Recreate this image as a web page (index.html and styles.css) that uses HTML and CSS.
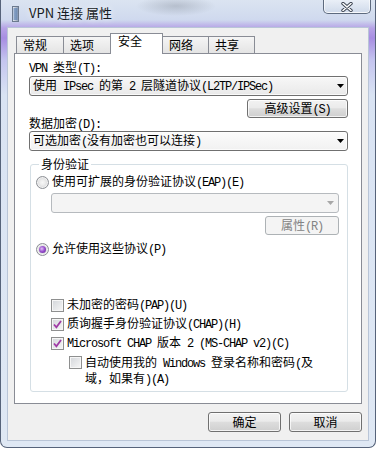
FILE: index.html
```html
<!doctype html>
<html lang="zh-CN">
  <head>
    <meta charset="UTF-8" />
    <title>VPN 连接 属性</title>
    <link rel="stylesheet" href="styles.css">
  </head>
  <body>
    <div class="window">
      <div class="titlebar">
        <svg class="app-icon" width="7" height="16" viewBox="0 0 7 16">
          <defs>
            <linearGradient id="ig" x1="0" x2="1" y1="0" y2="0">
              <stop offset="0" stop-color="#eef2f7" />
              <stop offset="1" stop-color="#8d9bb0" />
            </linearGradient>
          </defs>
          <rect x="0.5" y="0.5" width="6" height="15" fill="url(#ig)" stroke="#6c7a8e" />
          <path d="M1.5 3h4M1.5 5h4M1.5 7h4M1.5 9h4M1.5 11h4M1.5 13h4" stroke="#3d6aa8" stroke-width="1" />
        </svg>
        <span class="title">VPN 连接 属性</span>
        <div class="close-btn">
          <svg width="12" height="10" viewBox="0 0 12 10">
            <path d="M2 1.5l8 7M10 1.5l-8 7" stroke="#3a4250" stroke-width="3.4" stroke-linecap="round" />
            <path d="M2 1.5l8 7M10 1.5l-8 7" stroke="#fff" stroke-width="1.6" stroke-linecap="round" />
          </svg>
        </div>
      </div>

      <div class="client">
        <div class="tabs">
          <div class="tab tab-1">常规</div>
          <div class="tab tab-2">选项</div>
          <div class="tab tab-active">安全</div>
          <div class="tab tab-4">网络</div>
          <div class="tab tab-5">共享</div>
        </div>

        <div class="panel">
          <div class="label"><span class="en">VPN </span>类型<span class="en">(T):</span></div>
          <div class="combo">
            <span>使用<span class="en"> IPsec </span>的第<span class="en"> 2 </span>层隧道协议<span class="en">(L2TP/IPSec)</span></span>
            <svg class="arrow" width="7" height="4" viewBox="0 0 7 4"><path d="M0 0h7L3.5 4z" fill="#000" /></svg>
          </div>
          <button class="btn btn-advanced">高级设置<span class="en">(S)</span></button>
          <div class="label label-enc">数据加密<span class="en">(D):</span></div>
          <div class="combo combo-enc">
            <span>可选加密<span class="en">(</span>没有加密也可以连接<span class="en">)</span></span>
            <svg class="arrow" width="7" height="4" viewBox="0 0 7 4"><path d="M0 0h7L3.5 4z" fill="#000" /></svg>
          </div>

          <fieldset class="group">
            <legend>身份验证</legend>

            <div class="opt opt-eap">
              <span class="radio"></span>
              <span>使用可扩展的身份验证协议<span class="en">(EAP)(E)</span></span>
            </div>
            <div class="combo combo-off">
              <span></span>
              <svg class="arrow" width="7" height="4" viewBox="0 0 7 4"><path d="M0 0h7L3.5 4z" fill="#a7a7a7" /></svg>
            </div>
            <button class="btn btn-off">属性<span class="en">(R)</span></button>

            <div class="opt opt-allow">
              <span class="radio on"></span>
              <span>允许使用这些协议<span class="en">(P)</span></span>
            </div>

            <div class="opt check-row check-first">
              <span class="check"></span>
              <span>未加密的密码<span class="en">(PAP)(U)</span></span>
            </div>
            <div class="opt check-row">
              <span class="check">
                <svg width="9" height="9" viewBox="0 0 9 9"><path d="M1 4.5l2.4 2.8L8 1" fill="none" stroke="#a03aa6" stroke-width="1.8" /></svg>
              </span>
              <span>质询握手身份验证协议<span class="en">(CHAP)(H)</span></span>
            </div>
            <div class="opt check-row">
              <span class="check">
                <svg width="9" height="9" viewBox="0 0 9 9"><path d="M1 4.5l2.4 2.8L8 1" fill="none" stroke="#a03aa6" stroke-width="1.8" /></svg>
              </span>
              <span><span class="en">Microsoft CHAP </span>版本<span class="en"> 2 (MS-CHAP v2)(C)</span></span>
            </div>
            <div class="opt check-row check-auto">
              <span class="check"></span>
              <span class="auto-text">自动使用我的<span class="en"> Windows </span>登录名称和密码<span class="en">(</span>及域，如果有<span class="en">)(A)</span></span>
            </div>
          </fieldset>
        </div>

        <div class="footer">
          <button class="btn btn-dialog">确定</button>
          <button class="btn btn-dialog">取消</button>
        </div>
      </div>
    </div>
  </body>
</html>
```

FILE: styles.css
```css
:root {
  --frame-edge: #56637a;
  --tab-border: #898c95;
  --btn-border: #707070;
  --group-border: #d5dfe5;
  --client-bg: #f0f0f0;
  --check-purple: #a03aa6;
}

* {
  box-sizing: border-box;
}

body {
  margin: 0;
  background: #fff;
  font-family: "Noto Sans CJK SC", sans-serif;
  font-size: 12px;
  line-height: 14px;
  color: #000;
}

.en {
  font-family: "Liberation Mono", monospace;
  font-size: 12px;
  letter-spacing: -1.2px;
}

/* window frame */

.window {
  width: 376px;
  height: 448px;
  padding: 0 6px 6px;
  border: 1px solid var(--frame-edge);
  border-top: 0;
  border-radius: 0 0 7px 7px;
  background:
    radial-gradient(ellipse 40px 10px at 175px 6px, rgba(120, 128, 140, 0.35), transparent),
    linear-gradient(
      #dbe4f1 0,
      #cfd9ee 20px,
      #b6a3e6 28px,
      #a78de2 38px,
      #c4c4ef 60px,
      #d9e3f3 95px,
      #dfe8f4 100%
    );
}

.titlebar {
  height: 27px;
  display: flex;
  align-items: flex-start;
  padding-left: 5px;
  margin-right: -2px;
}

.app-icon {
  margin-top: 6px;
  flex: none;
}

.title {
  margin: 5px 0 0 10px;
  font-size: 13px;
  line-height: 16px;
  color: #151a22;
  text-shadow: 0 0 6px rgba(255, 255, 255, 0.9);
}

.close-btn {
  margin-left: auto;
  width: 48px;
  height: 14px;
  border: 1px solid #5d6a7e;
  border-top: 0;
  border-radius: 0 0 5px 5px;
  background: linear-gradient(rgba(240, 244, 250, 0.7), rgba(205, 216, 232, 0.7));
  box-shadow: inset 0 -1px 0 rgba(255, 255, 255, 0.8), inset 1px 0 0 rgba(255, 255, 255, 0.6), inset -1px 0 0 rgba(255, 255, 255, 0.6);
  display: flex;
  align-items: center;
  justify-content: center;
}

/* client area */

.client {
  height: 414px;
  border: 1px solid #b9c5d7;
  background: var(--client-bg);
  padding: 5px 6px 0;
}

.tabs {
  display: flex;
  align-items: flex-end;
  height: 21px;
  margin-bottom: -1px;
  padding-left: 2px;
}

.tab {
  height: 17px;
  margin-bottom: 1px;
  margin-left: -1px;
  padding: 1px 0 0 6px;
  border: 1px solid var(--tab-border);
  border-bottom: 0;
  background: linear-gradient(#f5f5f5, #e4e4e4);
}

.tab-1 {
  width: 48px;
  margin-left: 0;
}

.tab-2 {
  width: 48px;
}

.tab-active {
  position: relative;
  z-index: 1;
  width: 53px;
  height: 21px;
  margin-bottom: 0;
  padding: 0 0 0 7px;
  background: #fff;
}

.tab-4 {
  width: 47px;
}

.tab-5 {
  width: 47px;
}

.panel {
  height: 351px;
  border: 1px solid var(--tab-border);
  background: #fff;
  padding: 6px 13px 0 14px;
}

.label {
  height: 14px;
  margin-bottom: 2px;
}

.label-enc {
  margin: -2px 0 1px;
}

.combo {
  display: flex;
  align-items: center;
  justify-content: space-between;
  height: 20px;
  padding: 0 3px 0 3px;
  border: 1px solid var(--btn-border);
  border-radius: 3px;
  background: linear-gradient(#f7f7f7, #e9e9e9);
  box-shadow: inset 0 0 0 1px rgba(255, 255, 255, 0.7);
  white-space: nowrap;
}

.combo-enc {
  background: linear-gradient(#fcfcfc, #f1f1f1);
}

.combo-off {
  margin: 4px 0 0 15px;
  padding-right: 4px;
  border-color: #b6babe;
  background: #f4f4f4;
  box-shadow: none;
}

.arrow {
  flex: none;
}

.btn {
  display: block;
  height: 19px;
  padding: 0;
  border: 1px solid var(--btn-border);
  border-radius: 3px;
  background: linear-gradient(#f2f2f2 0, #ebebeb 45%, #dddddd 52%, #cfcfcf 100%);
  box-shadow: inset 0 0 0 1px rgba(255, 255, 255, 0.75);
  font-family: inherit;
  font-size: 12px;
  line-height: 14px;
  color: #000;
}

.btn-advanced {
  width: 101px;
  margin: 3px 0 0 auto;
}

.btn-off {
  width: 74px;
  margin: 3px 0 0 auto;
  border-color: #adb2b5;
  background: #f4f4f4;
  box-shadow: none;
  color: #838383;
}

/* group box */

.group {
  margin: 6px 0 0 1px;
  min-width: 0;
  padding: 0 8px 4px 5px;
  border: 1px solid var(--group-border);
  border-radius: 3px;
}

.group legend {
  margin-left: 3px;
  padding: 0 2px;
  line-height: 14px;
}

.opt {
  display: flex;
  align-items: center;
  gap: 3px;
  height: 14px;
}

.opt-eap {
  margin-top: 4px;
}

.opt-allow {
  margin-top: 7px;
}

.radio {
  position: relative;
  flex: none;
  width: 13px;
  height: 13px;
  border: 1px solid #8c8f95;
  border-radius: 50%;
  background: radial-gradient(circle, #f7f7f7 0, #eeeeee 30%, #d3d4d6 80%);
  box-shadow: inset 0 0 0 1px #f2f2f2;
}

.radio.on::after {
  content: "";
  position: absolute;
  left: 2px;
  top: 2px;
  width: 7px;
  height: 7px;
  border-radius: 50%;
  background: radial-gradient(circle at 40% 40%, #e2c4f6 0, #9b55d0 45%, #5b1590 100%);
}

.check-row {
  margin: 5px 0 0 15px;
}

.check-first {
  margin-top: 42px;
}

.check {
  flex: none;
  display: flex;
  align-items: center;
  justify-content: center;
  width: 13px;
  height: 13px;
  border: 1px solid #8e8f8f;
  background: linear-gradient(135deg, #d2d5d9, #f7f7f7);
  box-shadow: inset 0 0 0 1px #f6f6f6;
}

.check-auto {
  margin-left: 33px;
  height: auto;
  align-items: flex-start;
}

.check-auto .check {
  margin-top: 1px;
}

.auto-text {
  width: 235px;
}

/* dialog buttons */

.footer {
  display: flex;
  justify-content: flex-end;
  gap: 8px;
  margin-top: 8px;
}

.btn-dialog {
  width: 73px;
  height: 20px;
}
```
